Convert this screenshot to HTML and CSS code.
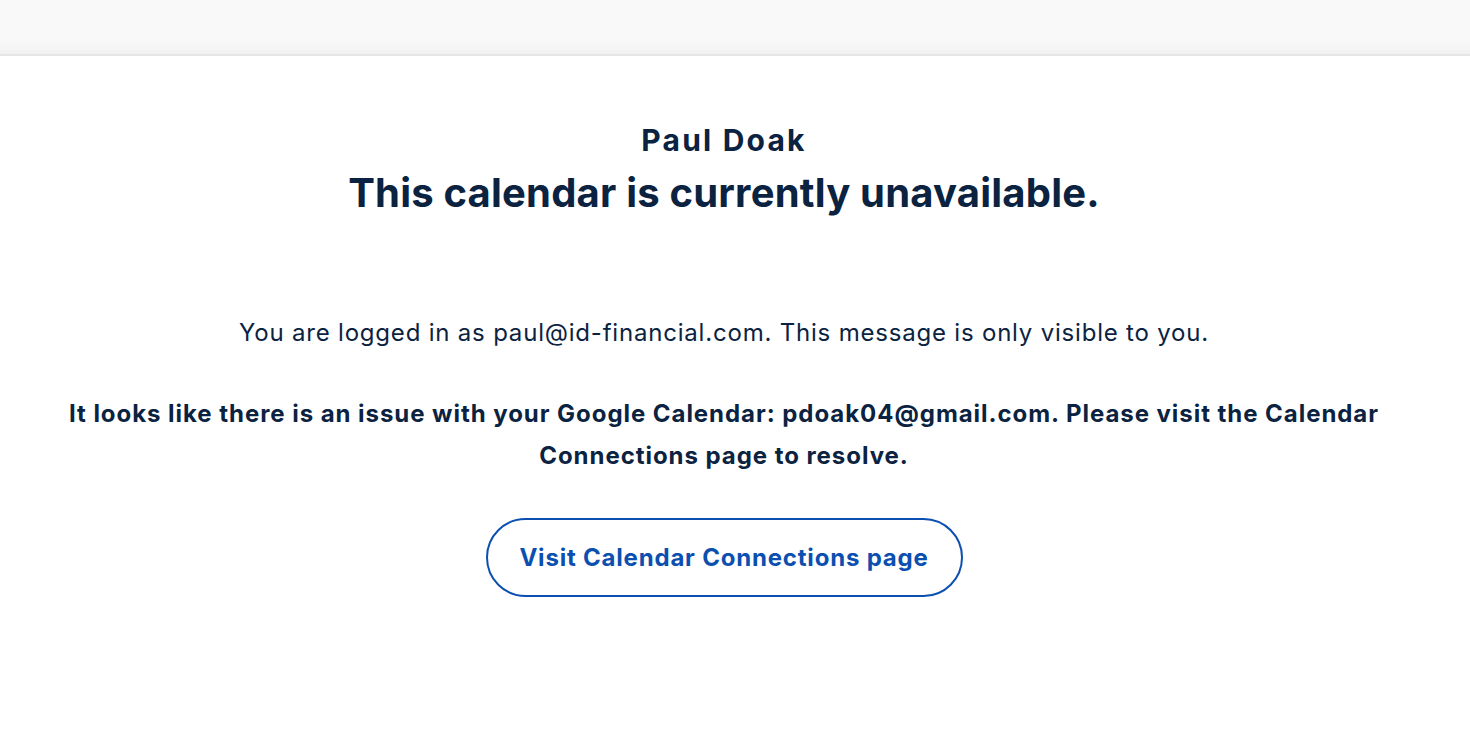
FILE: index.html
```html
<!DOCTYPE html>
<html>
<head>
<meta charset="utf-8">
<link rel="stylesheet" href="styles.css">
</head>
<body>
<header class="topbar"></header>
<div class="page">
  <main class="content">
    <div class="heading">
      <div class="owner">Paul Doak</div>
      <h1 class="title">This calendar is currently unavailable.</h1>
    </div>
    <p class="notice">You are logged in as paul@id-financial.com. This message is only visible to you.</p>
    <p class="issue">It looks like there is an issue with your Google Calendar: pdoak04@gmail.com. Please visit the Calendar Connections page to resolve.</p>
    <a class="btn" href="#">Visit Calendar Connections page</a>
  </main>
</div>
</body>
</html>
```
FILE: styles.css
```css
html, body {
  margin: 0;
  padding: 0;
  background: #ffffff;
}
body {
  font-family: Inter, "Open Sans", sans-serif;
  color: #0b2341;
}
.topbar {
  height: 54px;
  background: linear-gradient(#f9f9f9 0, #f9f9f9 40px, #f2f2f2 54px);
  border-bottom: 2px solid #e6e6e6;
}
.page {
  padding-right: 22px;
}
.content {
  display: flex;
  flex-direction: column;
  align-items: center;
  text-align: center;
  max-width: 1344px;
  margin: 0 auto;
}
.heading {
  padding-top: 64px;
}
.owner {
  font-size: 30px;
  font-weight: 700;
  line-height: 40px;
  letter-spacing: 2.2px;
}
.title {
  margin: 6px 0 0;
  font-size: 40px;
  font-weight: 700;
  line-height: 54px;
  letter-spacing: 0.2px;
}
.notice {
  margin: 96px 0 0;
  font-size: 24px;
  line-height: 34px;
  letter-spacing: 0.8px;
}
.issue {
  margin: 43px 0 0;
  font-size: 24px;
  font-weight: 700;
  line-height: 42px;
  letter-spacing: 0.95px;
}
.btn {
  margin-top: 41px;
  display: inline-flex;
  align-items: center;
  justify-content: center;
  width: 477px;
  height: 79px;
  box-sizing: border-box;
  border: 2px solid #0b4fb0;
  border-radius: 40px;
  color: #0b4fb0;
  font-size: 24px;
  font-weight: 700;
  letter-spacing: 0.8px;
  text-decoration: none;
}
```
